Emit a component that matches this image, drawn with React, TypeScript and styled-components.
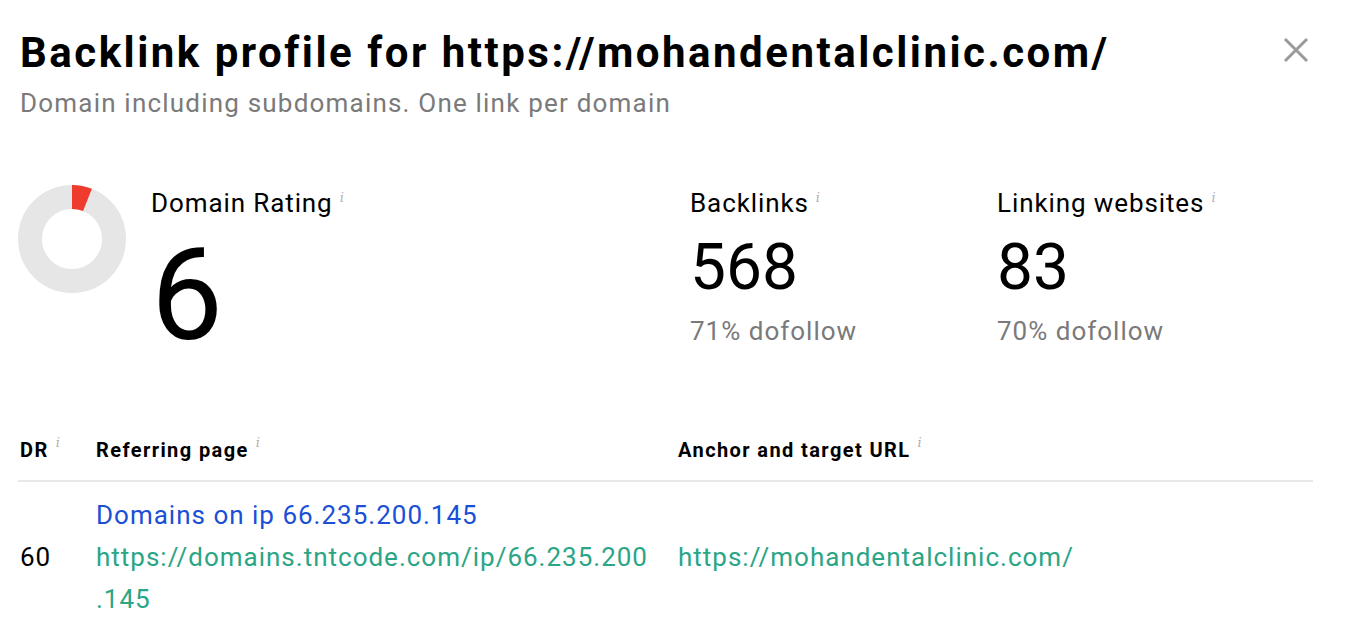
import React from "react";
import styled, { createGlobalStyle } from "styled-components";

const Global = createGlobalStyle`
  html, body { margin: 0; padding: 0; background: #fff; }
  body { font-family: Roboto, "Liberation Sans", sans-serif; color: #000; }
`;

const Page = styled.div`
  padding: 26px 58px 0 20px;
  width: 1371px;
  box-sizing: border-box;
`;

const Header = styled.div`
  display: flex;
  justify-content: space-between;
  align-items: flex-start;
`;

const Title = styled.h1`
  margin: 0;
  font-size: 42px;
  line-height: 54px;
  font-weight: 700;
  letter-spacing: 2.5px;
`;

const Subtitle = styled.div`
  margin-top: 6px;
  font-size: 26px;
  line-height: 34px;
  letter-spacing: 1.2px;
  color: #7a7a7a;
`;

const Close = styled.button`
  border: 0;
  background: none;
  padding: 0;
  margin: 11px 4px 0 0;
  width: 26px;
  height: 26px;
  cursor: pointer;
`;

const Stats = styled.div`
  display: flex;
  margin-top: 56px;
  margin-left: -2px;
`;

const DrBlock = styled.div`
  display: flex;
  align-items: flex-start;
  width: 672px;
  gap: 25px;
`;

const DonutWrap = styled.div`
  margin-top: 9px;
  width: 108px;
  height: 108px;
`;

const Metric = styled.div<{ $w?: number }>`
  display: flex;
  flex-direction: column;
  width: ${(p) => (p.$w ? `${p.$w}px` : "auto")};
`;

const Label = styled.div`
  font-size: 26px;
  line-height: 32px;
  letter-spacing: 0.9px;
  margin-top: 6px;
`;

const Info = styled.sup`
  font-family: "DejaVu Serif", serif;
  font-style: italic;
  font-size: 13px;
  color: #b0b0b0;
  margin-left: 7px;
  vertical-align: 10px;
  letter-spacing: 0;
  font-weight: 400;
`;

const BigNum = styled.div`
  font-size: 128px;
  line-height: 120px;
  margin-top: 16px;
`;

const Num = styled.div`
  font-size: 64px;
  line-height: 76px;
  margin-top: 11px;
`;

const Sub = styled.div`
  font-size: 26px;
  line-height: 40px;
  letter-spacing: 1px;
  color: #7a7a7a;
  margin-top: 5px;
`;

const Table = styled.div`
  margin-top: 61px;
  margin-left: -2px;
`;

const Row = styled.div<{ $head?: boolean }>`
  display: grid;
  grid-template-columns: 76px 582px 1fr;
  align-items: center;
  ${(p) => (p.$head ? `border-bottom: 2px solid #e8e8e8; height: 64px;` : ``)}
`;

const HeadCell = styled.div`
  font-weight: 700;
  font-size: 20px;
  letter-spacing: 1.4px;
  padding-left: 2px;
`;

const Cell = styled.div`
  font-size: 26px;
  line-height: 42px;
  letter-spacing: 1px;
  padding-left: 2px;
`;

const Body = styled.div`
  padding-top: 12px;
`;

const TitleLink = styled.a`
  display: block;
  color: #1a4fd6;
  text-decoration: none;
`;

const UrlLink = styled.a`
  display: block;
  color: #2aa585;
  text-decoration: none;
`;

const Donut = () => {
  const r = 42;
  const c = 2 * Math.PI * r;
  const pct = 0.06;
  return (
    <svg width="108" height="108" viewBox="0 0 108 108">
      <circle cx="54" cy="54" r={r} fill="none" stroke="#e6e6e6" strokeWidth="24" />
      <circle
        cx="54"
        cy="54"
        r={r}
        fill="none"
        stroke="#ef3a2e"
        strokeWidth="24"
        strokeDasharray={`${c * pct} ${c}`}
        transform="rotate(-90 54 54)"
      />
    </svg>
  );
};

export default function App() {
  return (
    <>
      <Global />
      <Page>
        <Header>
          <div>
            <Title>Backlink profile for https://mohandentalclinic.com/</Title>
            <Subtitle>Domain including subdomains. One link per domain</Subtitle>
          </div>
          <Close aria-label="Close">
            <svg width="26" height="26" viewBox="0 0 26 26">
              <path d="M2 2 L24 24 M24 2 L2 24" stroke="#9a9a9a" strokeWidth="3" />
            </svg>
          </Close>
        </Header>

        <Stats>
          <DrBlock>
            <DonutWrap>
              <Donut />
            </DonutWrap>
            <Metric>
              <Label>
                Domain Rating<Info>i</Info>
              </Label>
              <BigNum>6</BigNum>
            </Metric>
          </DrBlock>
          <Metric $w={307}>
            <Label>
              Backlinks<Info>i</Info>
            </Label>
            <Num>568</Num>
            <Sub>71% dofollow</Sub>
          </Metric>
          <Metric>
            <Label>
              Linking websites<Info>i</Info>
            </Label>
            <Num>83</Num>
            <Sub>70% dofollow</Sub>
          </Metric>
        </Stats>

        <Table>
          <Row $head>
            <HeadCell>
              DR<Info>i</Info>
            </HeadCell>
            <HeadCell>
              Referring page<Info>i</Info>
            </HeadCell>
            <HeadCell>
              Anchor and target URL<Info>i</Info>
            </HeadCell>
          </Row>
          <Body>
            <Row>
              <Cell>60</Cell>
              <Cell>
                <TitleLink href="#">Domains on ip 66.235.200.145</TitleLink>
                <UrlLink href="#">
                  https://domains.tntcode.com/ip/66.235.200
                  <br />
                  .145
                </UrlLink>
              </Cell>
              <Cell>
                <UrlLink href="#">https://mohandentalclinic.com/</UrlLink>
              </Cell>
            </Row>
          </Body>
        </Table>
      </Page>
    </>
  );
}
